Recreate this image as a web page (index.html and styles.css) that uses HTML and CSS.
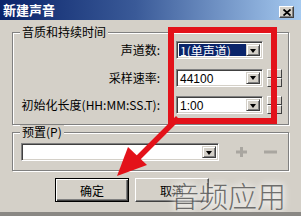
FILE: index.html
```html
<!DOCTYPE html>
<html lang="zh">
<head>
<meta charset="utf-8">
<link rel="stylesheet" href="styles.css">
</head>
<body>
<div class="window">
  <div class="titlebar">
    <span class="title">新建声音</span>
    <span class="close"><svg width="8" height="7" viewBox="0 0 8 7"><path d="M0.5 0.5 L7.5 6.5 M7.5 0.5 L0.5 6.5" stroke="#000" stroke-width="1.8" fill="none"/></svg></span>
  </div>
  <div class="body">
    <fieldset class="group quality">
      <legend>音质和持续时间</legend>
      <div class="rows">
        <label class="lbl">声道数:</label>
        <div class="combo"><span class="value selected">1(单声道)</span><span class="drop"><i class="tri"></i></span></div>
        <span class="nospin"></span>

        <label class="lbl">采样速率:</label>
        <div class="combo"><span class="value">44100</span><span class="drop"><i class="tri"></i></span></div>
        <span class="spin"><i class="sb"></i><i class="sb"></i></span>

        <label class="lbl">初始化长度(HH:MM:SS.T):</label>
        <div class="combo"><span class="value">1:00</span><span class="drop"><i class="tri"></i></span></div>
        <span class="spin"><i class="sb"></i><i class="sb"></i></span>
      </div>
    </fieldset>
    <fieldset class="group preset">
      <legend>预置(P)</legend>
      <div class="preset-row">
        <div class="combo wide"><span class="value"></span><span class="drop"><i class="tri"></i></span></div>
        <svg class="icon" width="13" height="10" viewBox="0 0 13 10"><path d="M5 0h3v3.5h4v3h-4V10H5V6.5H1v-3h4z" fill="#a9a6a0"/></svg>
        <svg class="icon minus" width="13" height="4" viewBox="0 0 13 4"><rect x="0" y="0.5" width="13" height="3" fill="#a9a6a0"/></svg>
      </div>
    </fieldset>
    <div class="buttons">
      <button class="btn default">确定</button>
      <button class="btn">取消</button>
    </div>
  </div>
  <div class="highlight"></div>
  <svg class="arrow" width="301" height="216" viewBox="0 0 301 216">
    <path d="M178 118 L134 162" stroke="#e3121a" stroke-width="5.5" fill="none"/>
    <path d="M117 176 L128 147 L147 165 Z" fill="#e3121a"/>
  </svg>
  <div class="watermark">音频应用</div>
</div>
</body>
</html>
```
FILE: styles.css
```css
* { box-sizing: border-box; }
html, body { margin: 0; padding: 0; }
body {
  width: 301px;
  height: 216px;
  overflow: hidden;
  font-family: "Noto Sans CJK SC", "Liberation Sans", sans-serif;
  font-size: 12px;
  color: #000;
}
.window {
  position: relative;
  width: 301px;
  height: 216px;
  background: #d4d0c8;
  display: flex;
  flex-direction: column;
  border-bottom: 4px solid #8a8884;
  overflow: hidden;
}
.titlebar {
  height: 20px;
  flex: none;
  display: flex;
  align-items: flex-end;
  justify-content: space-between;
  padding: 0 7px 2px 3px;
  background: linear-gradient(to right, #0a246a 0%, #3a5a98 45%, #a6caf0 100%);
}
.title {
  color: #fff;
  font-weight: bold;
  font-size: 13px;
  line-height: 15px;
  letter-spacing: 0;
  align-self: center;
}
.close {
  width: 15px;
  height: 12px;
  background: #d4d0c8;
  border: 1px solid;
  border-color: #fff #404040 #404040 #fff;
  box-shadow: inset -1px -1px #808080;
  display: flex;
  align-items: center;
  justify-content: center;
}
.close svg { display: block; }
.body {
  padding: 5px 12px 0 12px;
  display: flex;
  flex-direction: column;
}
.group {
  margin: 0;
  padding: 0;
  border: 1px solid #808080;
  box-shadow: 1px 1px 0 #fff, inset 1px 1px 0 #fff;
  min-width: 0;
}
.group legend {
  margin-left: 7px;
  padding: 0 2px;
  line-height: 14px;
  height: 14px;
  font-size: 12px;
  background: #d4d0c8;
}
.quality { height: 100px; }
.rows {
  display: grid;
  grid-template-columns: 147px 87px 15px;
  column-gap: 16px;
  row-gap: 9.5px;
  grid-auto-rows: 18px;
  padding-top: 2px;
  align-items: center;
}
.rows .combo { grid-column: 2; }
.rows .spin, .rows .nospin { margin-left: -12px; }
.lbl {
  text-align: right;
  white-space: nowrap;
  line-height: 18px;
}
.combo {
  height: 18px;
  display: flex;
  background: #fff;
  border: 1px solid;
  border-color: #808080 #fff #fff #808080;
  box-shadow: inset 1px 1px #404040, inset -1px -1px #d4d0c8;
  padding: 2px;
}
.combo .value {
  flex: 1;
  min-width: 0;
  line-height: 14px;
  padding-left: 1px;
  font-family: "Liberation Sans", "Noto Sans CJK SC", sans-serif;
  white-space: nowrap;
}
.combo .value.selected {
  background: #0a246a;
  color: #fff;
  font-family: "Noto Sans CJK SC", sans-serif;
}
.drop {
  width: 14px;
  flex: none;
  background: #d4d0c8;
  border: 1px solid;
  border-color: #d4d0c8 #404040 #404040 #d4d0c8;
  box-shadow: inset 1px 1px #fff, inset -1px -1px #808080;
  display: flex;
  align-items: center;
  justify-content: center;
}
.tri {
  width: 0;
  height: 0;
  border-left: 3.5px solid transparent;
  border-right: 3.5px solid transparent;
  border-top: 4px solid #000;
  margin-top: 1px;
}
.spin {
  width: 15px;
  height: 18px;
  display: flex;
  flex-direction: column;
}
.sb {
  flex: 1;
  border: 1px solid;
  border-color: #fff #404040 #404040 #fff;
  background: #d4d0c8;
}
.preset-row {
  display: flex;
  align-items: center;
  padding: 4px 0 9px 8px;
}
.combo.wide { width: 198px; }
.icon { display: block; margin-left: 16px; }
.icon.minus { margin-left: 16px; }
.buttons {
  display: flex;
  gap: 6px;
  padding-left: 43px;
  margin-top: 7px;
}
.btn {
  width: 74px;
  height: 24px;
  font-family: "Noto Sans CJK SC", sans-serif;
  font-size: 12px;
  background: #d4d0c8;
  border: 1px solid;
  border-color: #fff #404040 #404040 #fff;
  box-shadow: inset -1px -1px #808080;
  padding: 0;
  color: #000;
}
.btn.default {
  border: 1px solid #000;
  box-shadow: inset 1px 1px #fff, inset -1px -1px #404040, inset -2px -2px #808080;
}
.highlight {
  position: absolute;
  left: 168px;
  top: 27px;
  width: 109px;
  height: 97px;
  border: 6px solid #e3121a;
}
.arrow {
  position: absolute;
  left: 0;
  top: 0;
}
.watermark {
  position: absolute;
  left: 170px;
  top: 178px;
  font-size: 29px;
  line-height: 34px;
  font-weight: 300;
  color: rgba(70, 70, 70, 0.75);
  letter-spacing: 0;
  text-shadow: 0 0 6px #fff, 0 0 10px #fff;
}
```
